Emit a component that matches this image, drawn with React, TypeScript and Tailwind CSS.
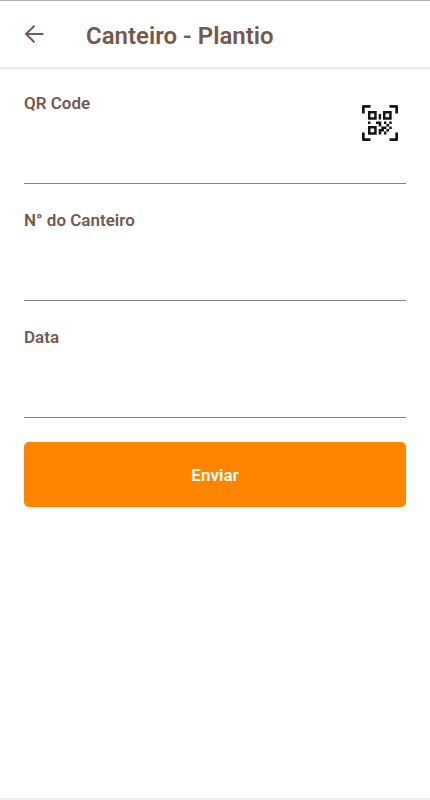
import React, { useState } from "react";

function BackIcon() {
  return (
    <svg viewBox="0 0 24 24" className="size-7" fill="currentColor">
      <path d="M20 11.2H7.3l5.7-5.7L11.8 4.3 4 12l7.8 7.7 1.2-1.2-5.7-5.7H20z" />
    </svg>
  );
}

function QrScanIcon() {
  return (
    <svg viewBox="0 0 36 36" className="size-9" fill="currentColor">
      <path d="M0 8.500V1.500A1.500 1.500 0 0 1 1.500 0h7v2.700H2.700v5.800zM27.500 0h7A1.500 1.500 0 0 1 36 1.500v7h-2.700V2.700h-5.800zM0 27.500h2.700v5.800h5.800V36h-7A1.500 1.500 0 0 1 0 34.500zM33.300 27.500H36v7a1.500 1.500 0 0 1-1.500 1.500h-7v-2.700h5.800z" />
      <path
        fillRule="evenodd"
        d="M6 6h8.700v8.700H6zm2.500 2.500v3.700h3.700V8.500zM21 6h8.700v8.700H21zm2.500 2.500v3.700h3.700V8.500zM6 21h8.700v8.700H6zm2.500 2.500v3.700h3.700v-3.700z"
      />
      <path d="M16.700 9h2.400v5.500h-2.400zM6 16.500h2.500v2.400H6zM14 16.500h5.200v5h-2.500v-2.600H14zM22 16.500h2.400v2.400H22zM27.200 16.500h2.500v2.400h-2.500zM24.400 18.900h2.700v2.500h-2.700zM19.300 21.400h5.100v2.500H22v2.700h-2.700v2.900h-2.600v-5.600h2.600zM27.200 21.400h2.500v2.500h-2.500zM24.400 23.900h2.700v2.600h-2.700zM22 26.600h2.400v2.900H22z" />
    </svg>
  );
}

function Field(props: {
  id: string;
  label: string;
  value: string;
  onChange: (value: string) => void;
  children?: React.ReactNode;
}) {
  return (
    <div className="relative flex h-[93px] flex-col border-b border-[#858585]">
      <label htmlFor={props.id} className="text-[17px] font-semibold leading-6">
        {props.label}
      </label>
      <input
        id={props.id}
        value={props.value}
        onChange={(ev) => props.onChange(ev.target.value)}
        className="w-full flex-1 bg-transparent outline-none"
      />
      {props.children}
    </div>
  );
}

function App() {
  const [qrCode, setQrCode] = useState("");
  const [canteiro, setCanteiro] = useState("");
  const [data, setData] = useState("");

  return (
    <div className="flex min-h-screen flex-col border-t border-b-2 border-t-[#b0b0b0] border-b-[#f0f0f0] bg-white font-['Roboto',sans-serif] text-[#735a4e]">
      <header className="flex h-[68px] items-center gap-[38px] border-b-2 border-[#ececec] px-5 shadow-xs">
        <button type="button" aria-label="Voltar">
          <BackIcon />
        </button>
        <h1 className="pt-1 text-2xl font-semibold">Canteiro - Plantio</h1>
      </header>
      <form
        className="flex flex-col gap-6 px-6 pt-[22px]"
        onSubmit={(ev) => ev.preventDefault()}
      >
        <Field id="qrcode" label="QR Code" value={qrCode} onChange={setQrCode}>
          <button
            type="button"
            aria-label="Ler QR Code"
            className="absolute top-3.5 right-2 text-[#151515]"
          >
            <QrScanIcon />
          </button>
        </Field>
        <Field
          id="canteiro"
          label="N° do Canteiro"
          value={canteiro}
          onChange={setCanteiro}
        />
        <Field id="data" label="Data" value={data} onChange={setData} />
        <button
          type="submit"
          className="h-[65px] w-full rounded-[5px] bg-[#ff8500] pt-0.5 text-[17px] font-semibold text-white"
        >
          Enviar
        </button>
      </form>
    </div>
  );
}

export default App;
